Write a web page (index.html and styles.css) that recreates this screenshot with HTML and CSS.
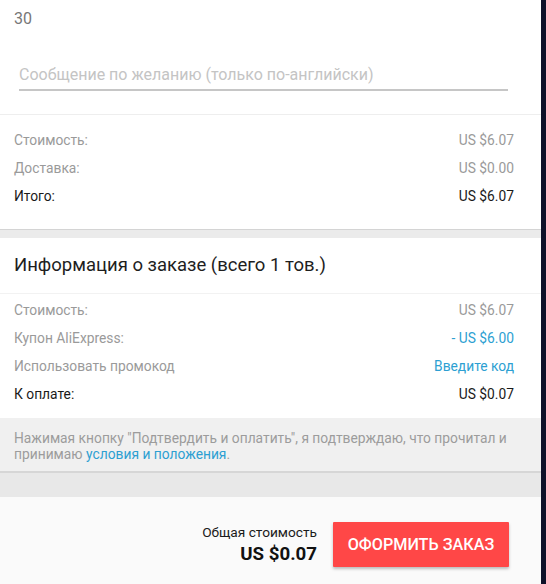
FILE: index.html
```html
<!DOCTYPE html>
<html>

<head>
    <title>Оформление заказа</title>
    <meta charset="UTF-8">
    <meta name="viewport" content="width=device-width, initial-scale=1.0">
    <link rel="stylesheet" href="styles.css">
</head>

<body>
    <div class="page">
        <div class="block">
            <div class="qty">30</div>
            <div class="message">
                <input class="message_input" placeholder="Сообщение по желанию (только по-английски)">
            </div>
            <div class="rows">
                <div class="row muted"><span>Стоимость:</span><span>US $6.07</span></div>
                <div class="row muted"><span>Доставка:</span><span>US $0.00</span></div>
                <div class="row"><span>Итого:</span><span>US $6.07</span></div>
            </div>
        </div>

        <div class="gap"></div>

        <div class="block">
            <div class="title">Информация о заказе (всего 1 тов.)</div>
            <div class="rows rows_info">
                <div class="row muted"><span>Стоимость:</span><span>US $6.07</span></div>
                <div class="row muted"><span>Купон AliExpress:</span><span class="blue">- US $6.00</span></div>
                <div class="row muted"><span>Использовать промокод</span><span class="blue">Введите код</span></div>
                <div class="row"><span>К оплате:</span><span>US $0.07</span></div>
            </div>
        </div>

        <div class="terms">
            Нажимая кнопку "Подтвердить и оплатить", я подтверждаю, что прочитал и принимаю <a href="#">условия и положения</a>.
        </div>

        <div class="gap gap_big"></div>

        <div class="footer">
            <div class="total">
                <div class="total_label">Общая стоимость</div>
                <div class="total_sum">US $0.07</div>
            </div>
            <button class="order">ОФОРМИТЬ ЗАКАЗ</button>
        </div>
    </div>
    <div class="edge"></div>
</body>

</html>
```

FILE: styles.css
```css
body {
    margin: 0;
    display: flex;
    height: 584px;
    overflow: hidden;
    font-family: Roboto, "Noto Sans", sans-serif;
    background: #0e1129;
}

.page {
    width: 541px;
    background: #ffffff;
    display: flex;
    flex-direction: column;
}

.edge {
    flex: 1;
}

.block {
    background: #ffffff;
}

.qty {
    padding: 10px 14px 0;
    font-size: 16px;
    line-height: 18px;
    color: #777777;
}

.message {
    padding: 37px 33px 0 19px;
    border-bottom: 1px solid #eeeeee;
}

.message_input {
    display: block;
    width: 100%;
    box-sizing: border-box;
    border: none;
    border-bottom: 2px solid #c6c6c6;
    padding: 0 0 4px;
    margin-bottom: 23px;
    font-family: Roboto, sans-serif;
    font-size: 16px;
    line-height: 20px;
    outline: none;
    background: transparent;
}

.message_input::placeholder {
    color: #c4c4c4;
}

.rows {
    padding: 11px 27px 19px 14px;
}

.rows_info {
    padding-top: 2px;
    padding-bottom: 10px;
}

.row {
    display: flex;
    justify-content: space-between;
    font-size: 13.8px;
    line-height: 28px;
    color: #1a1a1a;
}

.muted {
    color: #9a9a9a;
}

.blue {
    color: #2d9fd2;
}

.gap {
    height: 8px;
    background: #ebebeb;
    border-top: 1px solid #d4d4d4;
}

.gap_big {
    height: 24px;
    border-top: 2px solid #d6d6d6;
    background: #e8e8e8;
}

.title {
    padding: 16px 14px 16px;
    font-size: 18.5px;
    line-height: 23px;
    color: #1e1e1e;
    border-bottom: 1px solid #f2f2f2;
}

.terms {
    background: #f0f0f0;
    padding: 12px 20px 9px 14px;
    font-size: 13.8px;
    line-height: 16px;
    color: #9c9c9c;
}

.terms a {
    color: #2d9fd2;
    text-decoration: none;
}

.footer {
    flex: 1;
    background: #fafafa;
    display: flex;
    justify-content: flex-end;
    align-items: flex-start;
    padding: 25px 32px 0 0;
    gap: 16px;
}

.total {
    text-align: right;
    padding-top: 2px;
}

.total_label {
    font-size: 13.7px;
    line-height: 17px;
    color: #1a1a1a;
}

.total_sum {
    font-size: 18.7px;
    line-height: 26px;
    font-weight: bold;
    color: #111111;
}

.order {
    width: 176px;
    height: 45px;
    border: none;
    border-radius: 1px;
    background: #ff4747;
    color: #ffffff;
    font-family: Roboto, sans-serif;
    font-size: 16.2px;
    font-weight: 500;
    box-shadow: 0 2px 3px rgba(0, 0, 0, 0.25);
}
```
